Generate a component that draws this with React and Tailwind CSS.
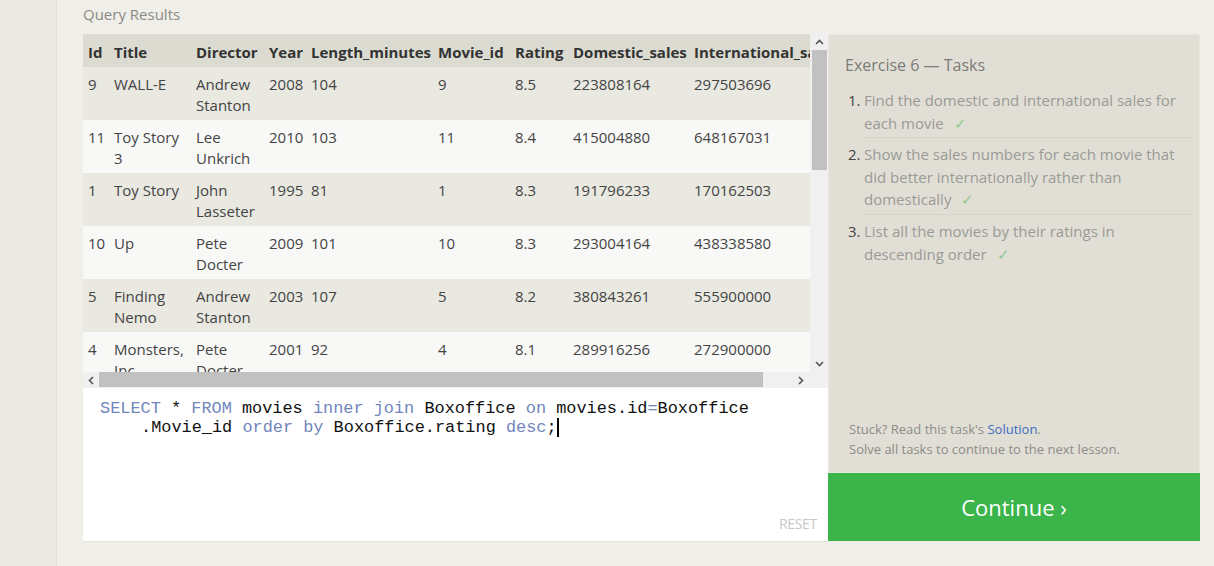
import React from "react";

const cols = ["26px", "82px", "73px", "42px", "127px", "77px", "58px", "121px", "150px"];
const headers = ["Id", "Title", "Director", "Year", "Length_minutes", "Movie_id", "Rating", "Domestic_sales", "International_sales"];
const rows = [
  ["9", "WALL-E", "Andrew Stanton", "2008", "104", "9", "8.5", "223808164", "297503696"],
  ["11", "Toy Story 3", "Lee Unkrich", "2010", "103", "11", "8.4", "415004880", "648167031"],
  ["1", "Toy Story", "John Lasseter", "1995", "81", "1", "8.3", "191796233", "170162503"],
  ["10", "Up", "Pete Docter", "2009", "101", "10", "8.3", "293004164", "438338580"],
  ["5", "Finding Nemo", "Andrew Stanton", "2003", "107", "5", "8.2", "380843261", "555900000"],
  ["4", "Monsters, Inc.", "Pete Docter", "2001", "92", "4", "8.1", "289916256", "272900000"],
];

function Row({ cells, header, bg }) {
  return (
    <div className={`flex ${bg} ${header ? "h-[33px] items-center pt-[3px]" : "h-[53px] items-start pt-[7px]"}`}>
      {cells.map((c, i) => (
        <div
          key={i}
          style={{ width: cols[i], minWidth: cols[i] }}
          className={`pl-[5px] shrink-0 leading-[21px] ${header ? "font-bold text-[#333] whitespace-nowrap" : "text-[#444]"}`}
        >
          {c}
        </div>
      ))}
    </div>
  );
}

const Kw = ({ children }) => <span className="text-[#7186bd]">{children}</span>;

export default function App() {
  return (
    <div className="w-[1214px] h-[566px] flex bg-[#f0eee8] overflow-hidden" style={{ fontFamily: '"Open Sans", sans-serif' }}>
      <div className="w-[57px] h-full bg-[#ebe9e4] border-r border-[#e0ded8] shrink-0" />
      <div className="flex-1 pl-[26px] flex flex-col">
        <div className="h-[34px] pt-[3px] text-[15px] text-[#8a8a86]">Query Results</div>
        <div className="flex">
          <div className="w-[745px] flex flex-col">
            <div className="flex h-[338px]">
              <div className="w-[727px] overflow-hidden text-[15px]">
                <Row cells={headers} header bg="bg-[#dcdbd1]" />
                {rows.map((r, i) => (
                  <Row key={i} cells={r} bg={i % 2 === 0 ? "bg-[#e9e8e1]" : "bg-[#f8f8f7]"} />
                ))}
              </div>
              <div className="w-[18px] bg-[#f0f0f0] flex flex-col items-center">
                <div className="h-[16px] flex items-center justify-center">
                  <svg width="9" height="6" viewBox="0 0 9 6"><path d="M1 5 L4.5 1.5 L8 5" stroke="#555" strokeWidth="1.6" fill="none" /></svg>
                </div>
                <div className="w-[15px] h-[120px] bg-[#c1c1c1]" />
                <div className="flex-1" />
                <div className="h-[16px] flex items-center justify-center">
                  <svg width="9" height="6" viewBox="0 0 9 6"><path d="M1 1 L4.5 4.5 L8 1" stroke="#555" strokeWidth="1.6" fill="none" /></svg>
                </div>
              </div>
            </div>
            <div className="h-[16px] flex bg-[#f0f0f0]">
              <div className="w-[16px] flex items-center justify-center">
                <svg width="6" height="9" viewBox="0 0 6 9"><path d="M5 1 L1.5 4.5 L5 8" stroke="#555" strokeWidth="1.6" fill="none" /></svg>
              </div>
              <div className="w-[664px] h-[15px] bg-[#c1c1c1]" />
              <div className="flex-1 flex items-center justify-end pr-[24px]">
                <svg width="6" height="9" viewBox="0 0 6 9"><path d="M1 1 L4.5 4.5 L1 8" stroke="#555" strokeWidth="1.6" fill="none" /></svg>
              </div>
            </div>
            <div className="h-[154px] bg-white border-b border-[#e6e4de] flex flex-col relative">
              <div className="pl-[17px] pt-[11px] text-[16.9px] leading-[19px] text-[#111] whitespace-pre" style={{ fontFamily: '"Liberation Mono", monospace' }}>
                <div><Kw>SELECT</Kw> * <Kw>FROM</Kw> movies <Kw>inner join</Kw> Boxoffice <Kw>on</Kw> movies.id<Kw>=</Kw>Boxoffice</div>
                <div className="pl-[41px] flex items-center">
                  <span>.Movie_id <Kw>order by</Kw> Boxoffice.rating <Kw>desc</Kw>;</span>
                  <span className="inline-block w-[2px] h-[19px] bg-black" />
                </div>
              </div>
              <div className="absolute right-[11px] bottom-[7px] text-[14px] text-[#c8c8c8] tracking-[-0.3px]">RESET</div>
            </div>
          </div>
          <div className="w-[372px] flex flex-col">
            <div className="h-[439px] bg-[#e1dfd5] border border-[#e9e7de] flex flex-col pl-[16px] pr-[7px]">
              <div className="pt-[18px] text-[16px] text-[#7b7b77] leading-[24px]">Exercise 6 — Tasks</div>
              <ol className="mt-[12px] text-[15px] leading-[22.6px] text-[#9a9a96]">
                {[
                  ["Find the domestic and international sales for", "each movie"],
                  ["Show the sales numbers for each movie that", "did better internationally rather than", "domestically"],
                  ["List all the movies by their ratings in", "descending order"],
                ].map((lines, i, arr) => (
                  <li key={i} className="flex">
                    <span className="w-[19px] pl-[3px] text-[#444] shrink-0">{i + 1}.</span>
                    <div className={`flex-1 pb-[3px] mb-[5px] ${i < arr.length - 1 ? "border-b border-[#d6d4ca]" : ""}`}>
                      {lines.map((l, j) => (
                        <div key={j}>
                          {l}
                          {j === lines.length - 1 && <span className="ml-[10px] text-[#8fc98f]">✓</span>}
                        </div>
                      ))}
                    </div>
                  </li>
                ))}
              </ol>
              <div className="flex-1" />
              <div className="pl-[4px] pb-[13px] text-[13px] leading-[20px] text-[#8c8c88]">
                <div>Stuck? Read this task's <span className="text-[#3d6dc0]">Solution</span>.</div>
                <div>Solve all tasks to continue to the next lesson.</div>
              </div>
            </div>
            <div className="h-[68px] bg-[#3bb54a] flex items-center justify-center text-white text-[22px]">
              Continue ›
            </div>
          </div>
        </div>
      </div>
    </div>
  );
}
